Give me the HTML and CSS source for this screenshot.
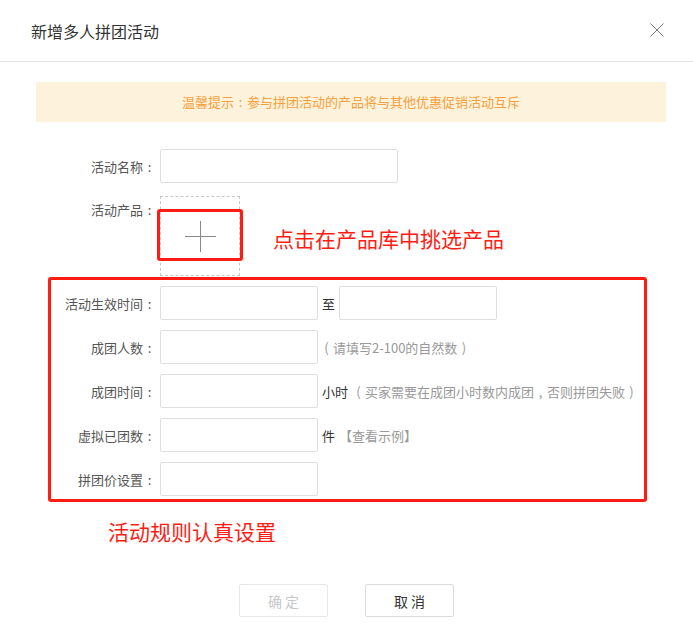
FILE: index.html
```html
<!DOCTYPE html>
<html lang="zh-CN">
<head>
  <meta charset="UTF-8" />
  <title>新增多人拼团活动</title>
  <link rel="stylesheet" href="styles.css">
</head>
<body>
  <div class="dialog">
    <div class="dialog-header">
      <h2>新增多人拼团活动</h2>
      <span class="close">
        <svg width="14" height="14" viewBox="0 0 14 14">
          <path d="M0.5 0.5 L13.5 13.5 M13.5 0.5 L0.5 13.5" stroke="#7a7a7a" stroke-width="1" fill="none"/>
        </svg>
      </span>
    </div>

    <div class="notice">温馨提示<i class="cc">:</i>参与拼团活动的产品将与其他优惠促销活动互斥</div>

    <div class="form">
      <div class="row">
        <label class="label">活动名称<i class="cc">:</i></label>
        <input class="input input-wide" type="text">
      </div>

      <div class="row row-product">
        <label class="label">活动产品<i class="cc">:</i></label>
        <div class="product-box">
          <span class="plus"></span>
          <span class="mark"></span>
        </div>
        <span class="tip-red">点击在产品库中挑选产品</span>
      </div>

      <div class="rules">
        <div class="row">
          <label class="label">活动生效时间<i class="cc">:</i></label>
          <input class="input" type="text">
          <span class="unit">至</span>
          <input class="input" type="text">
        </div>
        <div class="row">
          <label class="label">成团人数<i class="cc">:</i></label>
          <input class="input" type="text">
          <span class="hint"><i class="cc">(</i>请填写2-100的自然数<i class="cc">)</i></span>
        </div>
        <div class="row">
          <label class="label">成团时间<i class="cc">:</i></label>
          <input class="input" type="text">
          <span class="unit">小时</span>
          <span class="hint"><i class="cc">(</i>买家需要在成团小时数内成团<i class="cc">,</i>否则拼团失败<i class="cc">)</i></span>
        </div>
        <div class="row">
          <label class="label">虚拟已团数<i class="cc">:</i></label>
          <input class="input" type="text">
          <span class="unit">件</span>
          <span class="hint">【查看示例】</span>
        </div>
        <div class="row">
          <label class="label">拼团价设置<i class="cc">:</i></label>
          <input class="input" type="text">
        </div>
      </div>

      <div class="tip-red tip-rules">活动规则认真设置</div>
    </div>

    <div class="actions">
      <button class="btn btn-disabled">确 定</button>
      <button class="btn">取 消</button>
    </div>
  </div>
</body>
</html>
```

FILE: styles.css
```css
body {
  margin: 0;
  background: #fff;
  font-family: "Noto Sans CJK SC", "Noto Sans", sans-serif;
  color: #333;
}

/* full-width punctuation box, glyph centred like the original font */
.cc {
  display: inline-block;
  width: 1em;
  text-align: center;
  font-style: normal;
}

.dialog {
  width: 693px;
}

.dialog-header {
  height: 61px;
  border-bottom: 1px solid #e3e3e3;
  display: flex;
  align-items: center;
  justify-content: space-between;
  padding: 0 29px 0 31px;
}

.dialog-header h2 {
  margin: 0;
  font-size: 16px;
  font-weight: normal;
  color: #333;
}

.close {
  display: flex;
  margin-top: -2px;
}

.notice {
  margin: 20px 27px 0 36px;
  height: 40px;
  line-height: 40px;
  background: #fdf3dc;
  color: #f7a03c;
  font-size: 13px;
  text-align: center;
}

.form {
  margin-top: 27px;
}

.row {
  display: flex;
  align-items: center;
  margin-bottom: 10px;
  font-size: 13px;
}

.label {
  width: 156px;
  text-align: right;
  color: #555;
  margin-right: 4px;
  white-space: nowrap;
}

.input {
  box-sizing: border-box;
  width: 158px;
  height: 34px;
  border: 1px solid #dedede;
  border-radius: 2px;
  margin: 0;
  padding: 0 8px;
  outline: none;
}

.input-wide {
  width: 238px;
}

.unit {
  margin: 0 4px;
  color: #333;
}

.hint {
  color: #999;
  margin-left: 2px;
}

.unit + .hint {
  margin-left: 0;
}

.row-product {
  align-items: flex-start;
  margin-top: 13px;
  margin-bottom: 1px;
}

.row-product .label {
  margin-top: 4px;
}

.product-box {
  position: relative;
  box-sizing: border-box;
  width: 80px;
  height: 80px;
  border: 1px dashed #c8c8c8;
}

.plus {
  position: absolute;
  left: 24px;
  top: 24px;
  width: 31px;
  height: 31px;
}

.plus::before,
.plus::after {
  content: "";
  position: absolute;
  background: #888;
}

.plus::before {
  left: 0;
  top: 15px;
  width: 31px;
  height: 1px;
}

.plus::after {
  left: 15px;
  top: 0;
  width: 1px;
  height: 31px;
}

/* red annotation frame over the picker */
.mark {
  position: absolute;
  left: -4px;
  top: 12px;
  width: 80px;
  height: 46px;
  border: 3px solid #ff1c12;
  border-radius: 3px;
}

.tip-red {
  color: #ff1c12;
  font-size: 21px;
  line-height: 30px;
}

.row-product .tip-red {
  margin: 27px 0 0 33px;
}

.rules {
  margin-left: 48px;
  width: 593px;
  border: 3px solid #ff1c12;
  border-radius: 3px;
  padding: 6px 0 3px;
}

.rules .label {
  width: 105px;
}

.rules .row:last-child {
  margin-bottom: 0;
}

.tip-rules {
  margin: 14px 0 0 108px;
}

.actions {
  display: flex;
  justify-content: center;
  gap: 37px;
  margin-top: 38px;
}

.btn {
  width: 89px;
  height: 33px;
  background: #fff;
  border: 1px solid #dcdcdc;
  border-radius: 2px;
  font-family: inherit;
  font-size: 14px;
  color: #333;
}

.btn-disabled {
  color: #c8c8c8;
  border-color: #e8e8e8;
}
```
